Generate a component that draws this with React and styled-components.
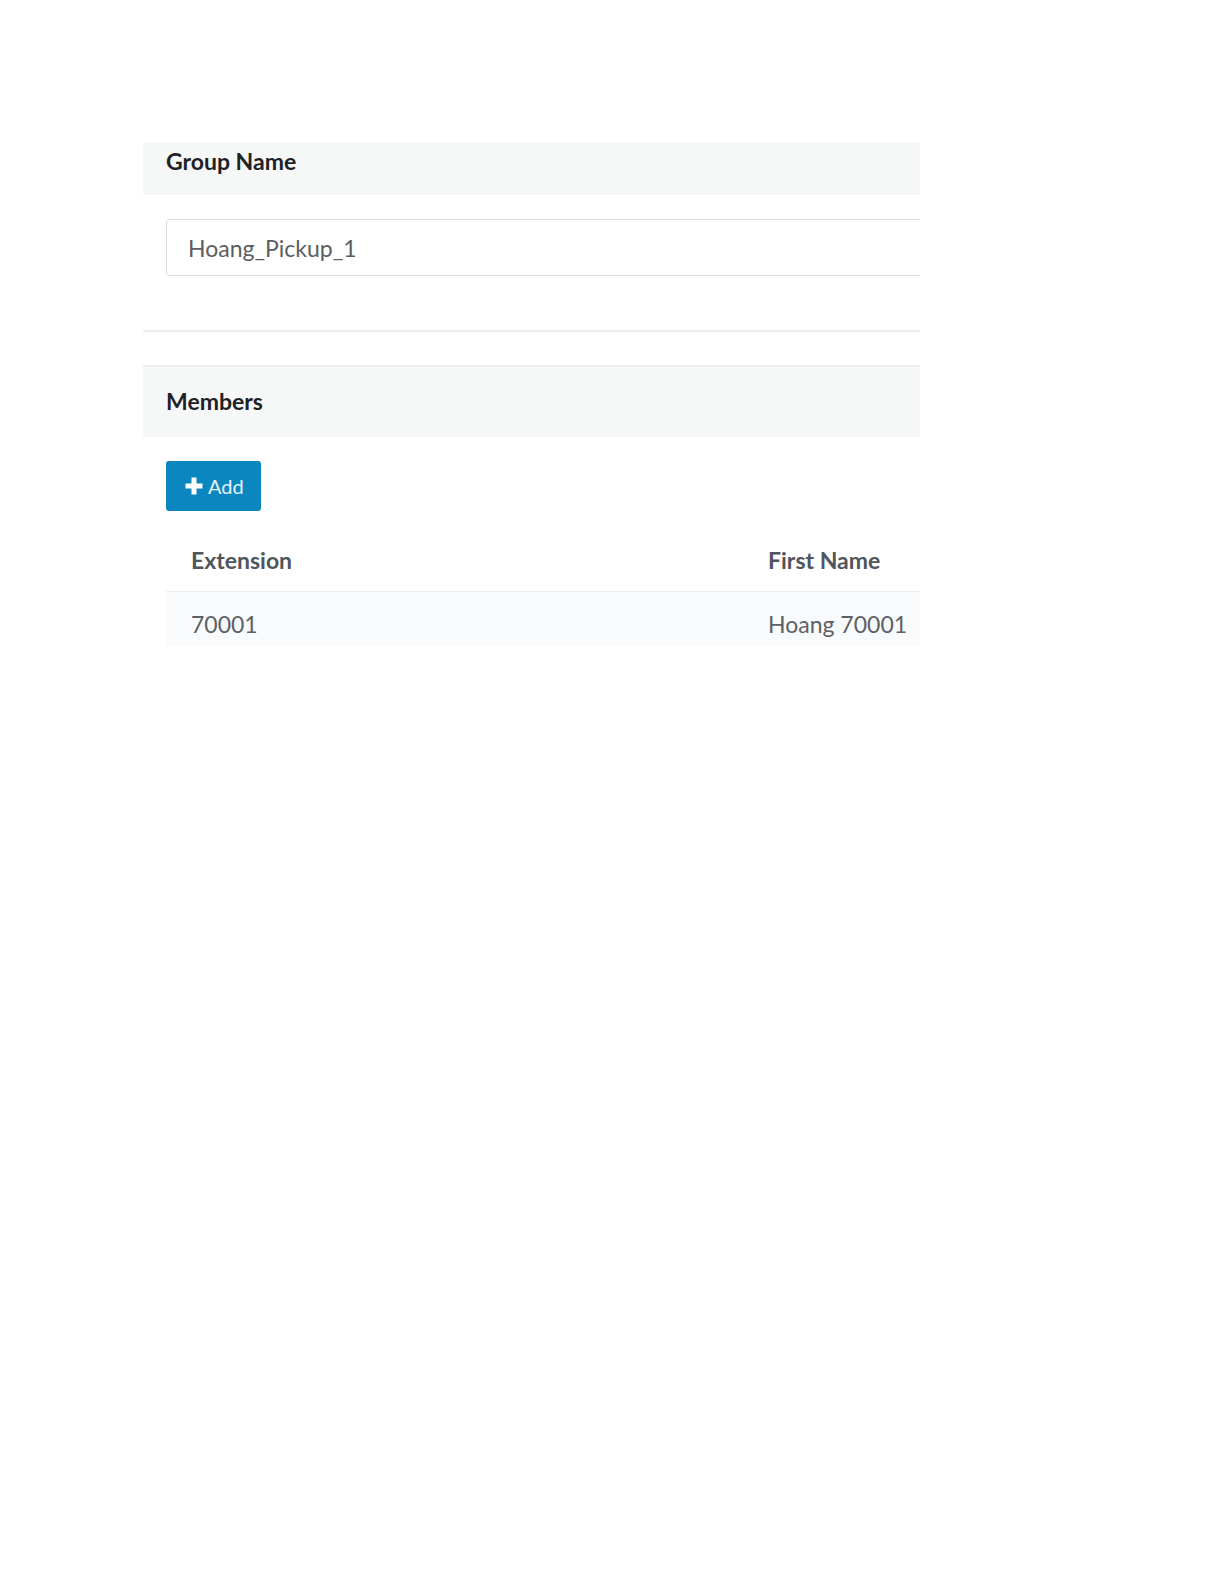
import React from "react";
import styled, { createGlobalStyle } from "styled-components";

const Global = createGlobalStyle`
  html, body { margin: 0; padding: 0; background: #ffffff; overflow-x: hidden; }
  body { font-family: Lato, "Open Sans", "Liberation Sans", sans-serif; }
`;

const Page = styled.div`
  padding: 142px 0 0 143px;
`;

const Panel = styled.div`
  width: 777px;
  overflow: hidden;
`;

const SectionHeader = styled.div`
  background: #f6f7f7;
  height: ${(p) => p.$h}px;
  box-sizing: border-box;
  padding: ${(p) => p.$pt}px 0 0 23px;
  font-size: 23px;
  line-height: 28px;
  font-weight: 700;
  color: #1e2226;
  border-top: ${(p) => (p.$bordered ? "2px solid #eceeef" : "none")};
`;

const SectionBody = styled.div`
  padding: ${(p) => p.$pad};
`;

const Input = styled.div`
  width: 820px;
  height: 57px;
  box-sizing: border-box;
  border: 1px solid #dcdfe1;
  border-radius: 3px;
  padding: 0 21px;
  display: flex;
  align-items: center;
  font-size: 23px;
  color: #5a5e62;
`;

const Divider = styled.div`
  height: 2px;
  background: #eceeef;
  margin-bottom: 33px;
`;

const AddButton = styled.button`
  display: flex;
  align-items: center;
  gap: 4px;
  width: 95px;
  height: 50px;
  box-sizing: border-box;
  padding: 0 0 0 18px;
  border: none;
  border-radius: 3px;
  background: #0b86bf;
  color: #e6f3fa;
  font-family: Lato, "Open Sans", sans-serif;
  font-size: 20px;
`;

const Table = styled.div`
  margin-top: 20px;
  width: 1160px;
`;

const Row = styled.div`
  display: grid;
  grid-template-columns: 577px 577px;
  height: ${(p) => p.$h}px;
  padding-top: ${(p) => p.$pt}px;
  align-items: start;
  background: ${(p) => (p.$shade ? "#f9fafb" : "transparent")};
  border-top: ${(p) => (p.$line ? "1px solid #eceeef" : "none")};
  box-sizing: border-box;
`;

const Cell = styled.div`
  padding-left: 25px;
  font-size: 23px;
  line-height: 28px;
  font-weight: ${(p) => (p.$head ? 700 : 400)};
  color: ${(p) => (p.$head ? "#50565c" : "#5d6166")};
`;

const Plus = () => (
  <svg width="20" height="20" viewBox="0 0 20 20">
    <path d="M7.5 1.5h5v6h6v5h-6v6h-5v-6h-6v-5h6z" fill="#ffffff" />
  </svg>
);

export default function App() {
  return (
    <>
      <Global />
      <Page>
        <Panel>
          <SectionHeader $h={53} $pt={5}>Group Name</SectionHeader>
          <SectionBody $pad="24px 0 54px 23px">
            <Input>Hoang_Pickup_1</Input>
          </SectionBody>
          <Divider />
          <SectionHeader $h={72} $pt={20} $bordered>Members</SectionHeader>
          <SectionBody $pad="24px 0 0 23px">
            <AddButton>
              <Plus />
              Add
            </AddButton>
            <Table>
              <Row $h={60} $pt={15}>
                <Cell $head>Extension</Cell>
                <Cell $head>First Name</Cell>
              </Row>
              <Row $h={55} $pt={18} $shade $line>
                <Cell>70001</Cell>
                <Cell>Hoang 70001</Cell>
              </Row>
            </Table>
          </SectionBody>
        </Panel>
      </Page>
    </>
  );
}
